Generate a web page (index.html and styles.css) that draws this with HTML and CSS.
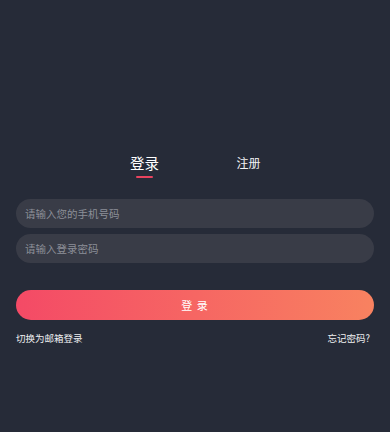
FILE: index.html
```html
<!DOCTYPE html>
<html lang="zh">
<head>
<meta charset="utf-8">
<link rel="stylesheet" href="styles.css">
</head>
<body>
<div class="page">
  <div class="tabs">
    <div class="tab active"><span class="tab-label">登录</span><span class="tab-bar"></span></div>
    <div class="tab"><span class="tab-label">注册</span></div>
  </div>
  <form class="form">
    <input class="field" type="text" placeholder="请输入您的手机号码">
    <input class="field" type="password" placeholder="请输入登录密码">
    <button class="submit" type="button">登 录</button>
  </form>
  <div class="links">
    <span class="link">切换为邮箱登录</span>
    <span class="link">忘记密码?</span>
  </div>
</div>
</body>
</html>
```
FILE: styles.css
```css
html, body {
  margin: 0;
  padding: 0;
  background: #262b38;
  height: 100%;
}
body {
  font-family: "Noto Sans CJK SC", "Noto Sans", sans-serif;
  color: #ffffff;
}
.page {
  padding: 153px 16px 0;
}
.tabs {
  display: flex;
  justify-content: center;
  padding-left: 3px;
}
.tab {
  width: 104px;
  display: flex;
  flex-direction: column;
  align-items: center;
}
.tab-label {
  font-size: 12px;
  line-height: 20px;
  color: #f2f2f4;
}
.tab.active .tab-label {
  font-size: 14.5px;
  color: #ffffff;
}
.tab-bar {
  margin-top: 3px;
  width: 17px;
  height: 2px;
  border-radius: 1px;
  background: #e8435f;
}
.form {
  margin-top: 21px;
  display: flex;
  flex-direction: column;
}
.field {
  height: 29px;
  border: none;
  border-radius: 15px;
  background: #393c47;
  padding: 0 9px;
  margin: 0 0 6px;
  font-family: inherit;
  font-size: 10.5px;
  color: #ffffff;
  outline: none;
}
.field::placeholder {
  color: #8c8f98;
}
.submit {
  margin-top: 21px;
  height: 30px;
  border: none;
  border-radius: 15px;
  background: linear-gradient(90deg, #f44a66 0%, #f88260 100%);
  color: #ffffff;
  font-family: inherit;
  font-size: 11px;
  letter-spacing: 1px;
  padding: 0;
}
.links {
  margin-top: 11px;
  display: flex;
  justify-content: space-between;
  padding-right: 4px;
}
.link {
  font-size: 9.5px;
  line-height: 14px;
  color: #f0f0f2;
}
```
